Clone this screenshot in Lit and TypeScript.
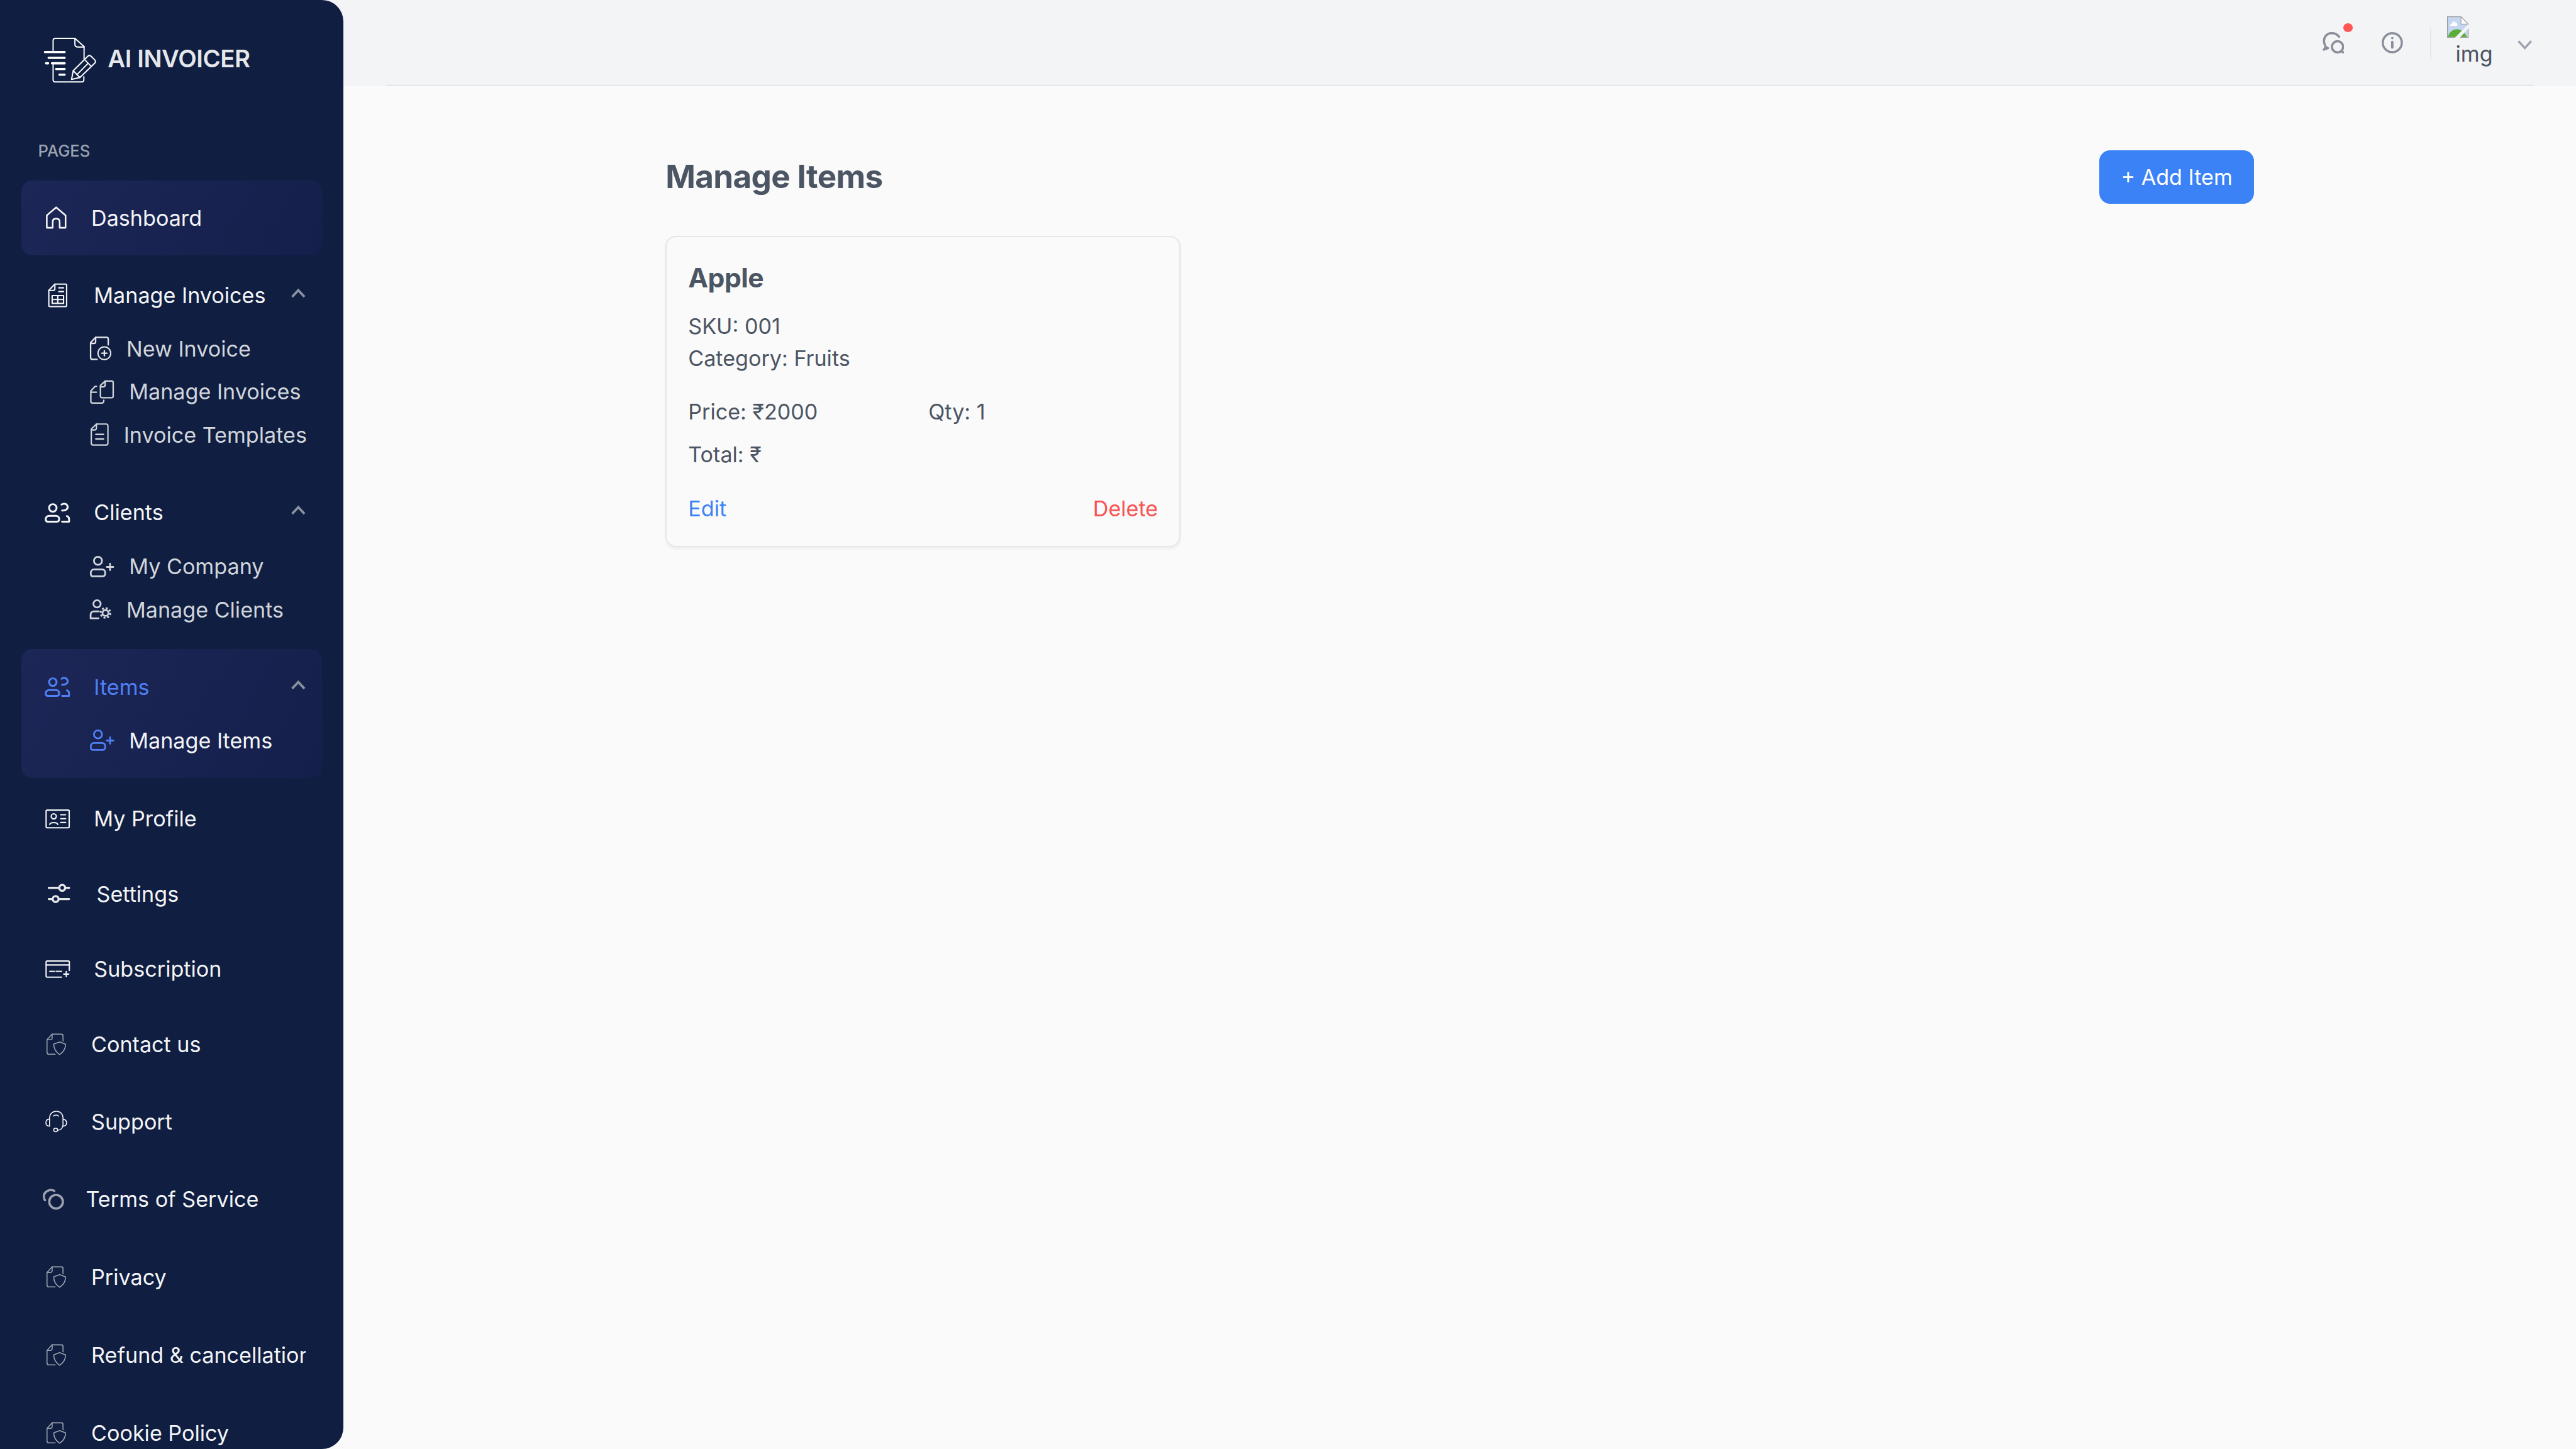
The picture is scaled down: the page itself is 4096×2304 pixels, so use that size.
import { LitElement, html, css } from "lit";
import { customElement } from "lit/decorators.js";

const docShield = () => html`<svg width="20" height="20" viewBox="24 5 240 240" fill="none" stroke="#9ca3af" stroke-width="9" stroke-linecap="round" stroke-linejoin="round"><path d="M135 215H80C68 215 62 208 62 197V85L108 35H190C200 35 205 42 205 50V98"/><path d="M108 35V70C108 80 100 85 92 85H62"/><path d="M175 105L122 125C122 170 140 195 175 218C210 195 228 170 228 125Z"/></svg>`;

const house = () => html`<svg width="20" height="20" viewBox="0 0 20 20" fill="none" stroke="#f3f4f6" stroke-width="1.2" stroke-linejoin="round"><path d="M3 8.2L10 2.2L17 8.2V17.4H12.6V13C12.6 11.3 11.6 10.6 10 10.6C8.4 10.6 7.4 11.3 7.4 13V17.4H3Z"/></svg>`;

const invoiceTable = () => html`<svg width="22" height="18" viewBox="0 0 22 18" fill="none" stroke="#f3f4f6" stroke-width="1" stroke-linecap="round" stroke-linejoin="round"><path d="M4.5 5.5L9 .8H17Q17.8.8 17.8 1.6V16.8Q17.8 17.6 17 17.6H5.3Q4.5 17.6 4.5 16.8Z"/><path d="M9 .8V4.5Q9 5.5 8 5.5H4.5"/><path d="M12 3.6H15.5M12 6.4H15.5"/><rect x="7" y="9.4" width="8.5" height="5.8"/><path d="M7 12.3H15.5M11.2 9.4V15.2"/></svg>`;

const people = (c: string) => html`<svg width="22" height="16" viewBox="0 0 22 16" fill="none" stroke=${c} stroke-width="1.4" stroke-linecap="round" stroke-linejoin="round"><circle cx="7.5" cy="4.5" r="2.8"/><path d="M14 2C15 1.1 17.6 1 18.4 3C19.2 5 17.2 6.8 14.4 6.4"/><path d="M4.9 10.4H9.7C11.2 10.4 12.2 11.5 12.2 12.7C12.2 14 11.6 14.8 10.6 14.8H3.6C2.7 14.8 2.2 14 2.2 12.8C2.2 11.5 3.4 10.4 4.9 10.4Z"/><path d="M14.4 14.8H19.6V12.8C19.6 11.6 19 10.9 18 10.6"/></svg>`;

const fileAdd = () => html`<svg width="16" height="18" viewBox="54 30 192 216" fill="none" stroke="#e5e7eb" stroke-width="13" stroke-linecap="round" stroke-linejoin="round"><path d="M118 235H76C64 235 60 226 60 215V85L105 38H205C214 38 218 45 218 55V105"/><path d="M105 38V78C105 88 100 92 90 92H60"/><circle cx="183" cy="180" r="57" stroke-width="11"/><path d="M183 157V203M160 180H206"/></svg>`;

const fileCopy = () => html`<svg width="18" height="18" viewBox="54 425 216 216" fill="none" stroke="#d1d5db" stroke-width="13" stroke-linecap="round" stroke-linejoin="round"><path d="M148 475L190 436H250C259 436 262 442 262 450V570C262 580 258 585 248 585H165C152 585 148 580 148 570Z"/><path d="M190 436V470C190 482 182 488 170 488H148"/><path d="M112 483H100L62 525V618C62 628 68 633 78 633H160C172 633 178 625 178 608"/><path d="M62 535H112"/></svg>`;

const fileLines = () => html`<svg width="14" height="17" viewBox="54 818 168 204" fill="none" stroke="#d1d5db" stroke-width="12" stroke-linecap="round" stroke-linejoin="round"><path d="M66 870L112 825H200C210 825 215 830 215 842V995C215 1008 210 1013 200 1013H82C70 1013 66 1005 66 995Z"/><path d="M112 825V860C112 872 105 878 95 878H66"/><path d="M107 918H175M107 958H175" stroke-width="14"/></svg>`;

const userPlus = (c: string) => html`<svg width="18" height="16" viewBox="0 0 18 16" fill="none" stroke=${c} stroke-width="1.3" stroke-linecap="round" stroke-linejoin="round"><circle cx="6" cy="3.6" r="3"/><path d="M3 10H9C10.6 10 11.4 11.2 11.4 12.6C11.4 14.2 10.8 15.2 9.6 15.2H2C1 15.2 .6 14.2 .6 12.8C.6 11.2 1.6 10 3 10Z"/><path d="M15 5.8V10.6M12.6 8.2H17.4"/></svg>`;

const userGear = () => html`<svg width="16" height="14" viewBox="0 0 16 14" fill="none" stroke="#d1d5db" stroke-width="1.3" stroke-linecap="round" stroke-linejoin="round"><circle cx="5.3" cy="2.9" r="2.7"/><path d="M6.6 8.5H3C1.4 8.5.5 9.6.5 11V13.7H6.4"/><circle cx="11.6" cy="9.7" r="2.2"/><circle cx="11.6" cy="9.7" r="3.6" stroke-width="1.4" stroke-dasharray="1.5 1.33" stroke-linecap="butt"/></svg>`;

const idCard = () => html`<svg width="22" height="14" viewBox="0 0 22 14" fill="none" stroke="#f3f4f6" stroke-width="1" stroke-linecap="round" stroke-linejoin="round"><rect x="2.5" y=".5" width="17.2" height="13.2" rx=".8"/><circle cx="8.2" cy="5.2" r="1.9"/><path d="M5.2 11.2C5.6 9.4 10.8 9.4 11.2 11.2"/><path d="M13.4 4H17M13.4 6.9H17M13.4 9.8H17"/></svg>`;

const sliders = () => html`<svg width="24" height="16" viewBox="0 0 24 16" fill="none" stroke="#e5e7eb" stroke-width="1.6" stroke-linecap="round"><path d="M4.5 3.6H19.6M4.5 12H19.6"/><circle cx="14.5" cy="3.6" r="2.2" fill="#0f1e41"/><circle cx="9.6" cy="12" r="2.2" fill="#0f1e41"/></svg>`;

const cardPlus = () => html`<svg width="22" height="14" viewBox="0 0 22 14" fill="none" stroke="#f3f4f6" stroke-width="1" stroke-linecap="round" stroke-linejoin="round"><path d="M19.8 8V1.8Q19.8 1 19 1H3.3Q2.5 1 2.5 1.8V12.2Q2.5 13 3.3 13H14"/><path d="M2.5 3.9H19.8M5.2 8.7H8.7M10 8.7H14M17.5 8.8V12.6M15.6 10.7H19.4"/></svg>`;

const headset = () => html`<svg width="20" height="20" viewBox="24 17 240 240" fill="none" stroke="#f3f4f6" stroke-width="9" stroke-linecap="round" stroke-linejoin="round"><path d="M85 178V105C85 70 110 45 145 45C180 45 205 70 205 105V165C205 195 185 215 157 215"/><path d="M82 115C60 117 52 130 52 148C52 165 60 178 85 178"/><path d="M208 116C230 120 237 132 237 148C237 165 230 178 205 178"/><rect x="122" y="197" width="35" height="31" rx="15"/><path d="M120 88C130 76 155 76 165 88"/></svg>`;

const swirl = () => html`<svg width="16" height="16" viewBox="24 738 192 192" fill="none" stroke="#9ca3af" stroke-width="20" stroke-linecap="round"><circle cx="143" cy="855" r="61"/><path d="M127 758C90 738 32 760 34 812C35 825 38 835 44 842"/></svg>`;

const chevUp = () => html`<svg class="chev" width="10.6" height="6.8" viewBox="0 0 10.6 6.8" fill="none" stroke="#8b92a1" stroke-width="1.8"><path d="M.7 6.1L5.3 1.2L9.9 6.1"/></svg>`;

const logo = () => html`<svg class="logo" width="47.5" height="40" viewBox="0 0 570 480" fill="none" stroke="#fff" stroke-width="11" stroke-linecap="round" stroke-linejoin="round"><path d="M115 155V65C115 53 123 45 135 45H310L392 118V232"/><path d="M310 45V95C310 112 320 122 337 122H392"/><path d="M115 280V415C115 427 123 435 135 435H370C382 435 390 427 390 415V388"/><path d="M42 167H218M75 219H218M52 268H70M105 268H218M142 319H218M172 370H218" stroke-width="20"/><path d="M280 412L295 335L425 205C435 195 445 195 455 205L487 237C497 247 497 257 487 267L355 395Z"/><path d="M295 335L355 395M400 238L455 295M330 368L428 268"/></svg>`;

const searchChat = () => html`<svg width="16" height="16" viewBox="72 108 192 192" fill="none" stroke="#8a8f9a" stroke-width="20" stroke-linecap="round" stroke-linejoin="round"><path d="M220 150C200 125 170 115 145 118C105 122 82 160 85 190C86 210 92 225 100 242"/><path d="M84 265L120 252L100 240Z"/><circle cx="206" cy="240" r="50"/><path d="M242 278L256 290"/></svg>`;

const infoIcon = () => html`<svg width="16" height="16" viewBox="603 108 192 192" fill="none" stroke="#8a8f9a" stroke-width="20" stroke-linecap="round"><circle cx="698" cy="203" r="85"/><circle cx="698" cy="162" r="11" fill="#8a8f9a" stroke="none"/><path d="M698 197V246" stroke-width="22"/></svg>`;

const brokenImg = () => html`<svg class="broken" width="16" height="16" viewBox="0 0 16 16"><path d="M.3.3H10.4L15.7 5.8V15.7H.3Z" fill="#c5d6f2" stroke="#9a9a9a" stroke-width=".6"/><path d="M10.4.3V5.8H15.7Z" fill="#fff" stroke="#a8a8a8" stroke-width=".6"/><path d="M2 7.2C2 6 3 5.6 3.4 5.6C3.6 3.6 6 3.2 6.6 4.8C7.6 4.8 8 6.2 7.6 7.2Z" fill="#fff"/><path d="M.6 15.4C1.6 11.4 4.4 9.6 7.4 9.6C10.6 9.6 13.4 12 14.8 15.4Z" fill="#5aae38"/><path d="M5.8 16L16 5.6V9L9.4 16Z" fill="#f3f4f6"/></svg>`;

const chevDown = () => html`<svg class="hchev" width="10.9" height="6.8" viewBox="0 0 10.9 6.8" fill="none" stroke="#9ca3af" stroke-width="1.6"><path d="M.7.6L5.45 5.8L10.2.6"/></svg>`;

@customElement("app-root")
export class AppRoot extends LitElement {
  static styles = css`
    :host {
      display: block;
      width: 1920px;
      height: 1080px;
      zoom: 2.133333;
      overflow: hidden;
      background: #fafafa;
      font-family: Inter, "Liberation Sans", sans-serif;
      font-size: 16px;
      line-height: 24px;
      color: #4b5563;
    }
    * { box-sizing: border-box; }
    .app { display: flex; width: 1920px; height: 1080px; overflow: hidden; }
    .side {
      flex: none;
      position: relative;
      z-index: 1;
      width: 256px;
      height: 1080px;
      margin-right: -16px;
      overflow: hidden;
      border-radius: 0 16px 16px 0;
      background: #0f1e41;
      padding-top: 25px;
    }
    .brand { display: flex; align-items: center; gap: 2.8px; padding-left: 30px; height: 40px; }
    .logo { flex: none; display: block; }
    .brand-name { font-size: 18px; line-height: 28px; font-weight: 600; letter-spacing: -.2px; color: #e5e7eb; margin-bottom: 2px; white-space: nowrap; }
    .pages { margin: 39.5px 0 0 28.4px; font-size: 12px; line-height: 16px; font-weight: 500; color: #9ca3af; }
    .nav { display: flex; flex-direction: column; padding: 0 16px; margin-top: 13.9px; }
    .row {
      display: flex;
      align-items: center;
      gap: 16px;
      height: 56px;
      padding: 0 12px 0 16px;
      font-weight: 400;
      color: #f3f4f6;
    }
    .row svg { flex: none; display: block; overflow: visible; }
    .label { min-width: 0; white-space: nowrap; overflow: hidden; }
    .pill { border-radius: 8px; background: linear-gradient(120deg, #1c2757, #141f4b); }
    .group { padding: 4px 0 12px; }
    .head { height: 48px; }
    .chev { margin-left: auto; margin-bottom: 3px; margin-right: .3px; }
    .sub { height: 32px; gap: 11.2px; padding: 0 10px 0 51px; color: #d1d5db; }
    .g1 { margin-top: 1.6px; }
    .g2 { margin-top: 2px; }
    .g3 { margin-top: 1.6px; height: 96px; }
    .g2 .subs { margin-top: .4px; }
    .blue { color: #5080f5; }
    .bright { color: #f3f4f6; }
    .profile { margin-top: 2.4px; }
    .tall { height: 58px; }
    .support { margin-top: .6px; }

    .col { flex: 1; min-width: 0; display: flex; flex-direction: column; }
    .top { flex: none; height: 64px; background: #f3f4f6; padding: 0 32px 0 48px; }
    .top-in { display: flex; align-items: center; justify-content: flex-end; height: 64px; box-shadow: inset 0 -1px #e5e7eb; }
    .ico { position: relative; display: block; width: 16px; height: 16px; }
    .ico svg { display: block; }
    .dot { position: absolute; left: 15.4px; top: -6.5px; width: 7.3px; height: 6.5px; border-radius: 50%; background: #ff5555; }
    .i2 { margin-left: 28px; }
    .div { width: 1px; height: 24px; background: #e5e7eb; margin-left: 20px; }
    .avatar { width: 40px; height: 40px; margin-left: 12px; text-align: center; overflow: hidden; }
    .broken { display: block; }
    .hchev { display: block; margin: 3px .6px 0 12.4px; }

    .main { flex: 1; margin-left: 16px; background: #fafafa; display: flex; justify-content: center; padding-top: 48px; }
    .wrap { width: 1184px; }
    .title-row { display: flex; align-items: center; justify-content: space-between; height: 40px; margin-bottom: 24px; }
    h1 { margin: 0 0 1.4px; font-size: 24px; line-height: 32px; font-weight: 700; letter-spacing: -.3px; color: #4b5563; }
    .add { display: flex; align-items: center; height: 40px; padding: 0 16px; border-radius: 8px; background: #3b82f6; color: #fff; white-space: nowrap; }
    .grid { display: grid; grid-template-columns: repeat(3, 1fr); gap: 16px; }
    .card { border: 1px solid #e5e7eb; border-radius: 8px; padding: 16px; box-shadow: 0 1px 2px rgba(0,0,0,.05); }
    h2 { margin: 0 0 10px; font-size: 20px; line-height: 28px; font-weight: 700; letter-spacing: -.25px; color: #4b5563; }
    .two { display: grid; grid-template-columns: 1fr 1fr; gap: 8px; margin-top: 16px; }
    .actions { display: flex; justify-content: space-between; margin-top: 16px; }
    .edit { color: #3b82f6; }
    .del { color: #f85252; }
  `;

  private sub(icon: unknown, label: string, cls = "") {
    return html`<div class="row sub ${cls}">${icon}<span class="label">${label}</span></div>`;
  }

  private flat(icon: unknown, label: string, cls = "") {
    return html`<div class="row ${cls}">${icon}<span class="label">${label}</span></div>`;
  }

  private head(icon: unknown, label: string, cls = "") {
    return html`<div class="row head ${cls}">${icon}<span class="label">${label}</span>${chevUp()}</div>`;
  }

  render() {
    return html`
      <div class="app">
        <aside class="side">
          <div class="brand">${logo()}<span class="brand-name">AI INVOICER</span></div>
          <div class="pages">PAGES</div>
          <nav class="nav">
            ${this.flat(house(), "Dashboard", "pill")}
            <div class="group g1">
              ${this.head(invoiceTable(), "Manage Invoices")}
              <div class="subs">
                ${this.sub(fileAdd(), "New Invoice")}
                ${this.sub(fileCopy(), "Manage Invoices")}
                ${this.sub(fileLines(), "Invoice Templates")}
              </div>
            </div>
            <div class="group g2">
              ${this.head(people("#f3f4f6"), "Clients")}
              <div class="subs">
                ${this.sub(userPlus("#d1d5db"), "My Company")}
                ${this.sub(userGear(), "Manage Clients")}
              </div>
            </div>
            <div class="group g3 pill">
              ${this.head(people("#5080f5"), "Items", "blue")}
              <div class="subs">${this.sub(userPlus("#5080f5"), "Manage Items", "bright")}</div>
            </div>
            ${this.flat(idCard(), "My Profile", "profile")}
            ${this.flat(sliders(), "Settings")}
            ${this.flat(cardPlus(), "Subscription")}
            ${this.flat(docShield(), "Contact us")}
            ${this.flat(headset(), "Support", "tall support")}
            ${this.flat(swirl(), "Terms of Service", "tall")}
            ${this.flat(docShield(), "Privacy", "tall")}
            ${this.flat(docShield(), "Refund & cancellation", "tall")}
            ${this.flat(docShield(), "Cookie Policy", "tall")}
          </nav>
        </aside>
        <div class="col">
          <header class="top">
            <div class="top-in">
              <span class="ico">${searchChat()}<span class="dot"></span></span>
              <span class="ico i2">${infoIcon()}</span>
              <span class="div"></span>
              <div class="avatar">${brokenImg()}img</div>
              ${chevDown()}
            </div>
          </header>
          <main class="main">
            <div class="wrap">
              <div class="title-row">
                <h1>Manage Items</h1>
                <div class="add">+ Add Item</div>
              </div>
              <div class="grid">
                <article class="card">
                  <h2>Apple</h2>
                  <div>SKU: 001</div>
                  <div>Category: Fruits</div>
                  <div class="two">
                    <div>Price: ₹2000</div>
                    <div>Qty: 1</div>
                    <div>Total: ₹</div>
                  </div>
                  <div class="actions">
                    <span class="edit">Edit</span>
                    <span class="del">Delete</span>
                  </div>
                </article>
              </div>
            </div>
          </main>
        </div>
      </div>
    `;
  }
}
